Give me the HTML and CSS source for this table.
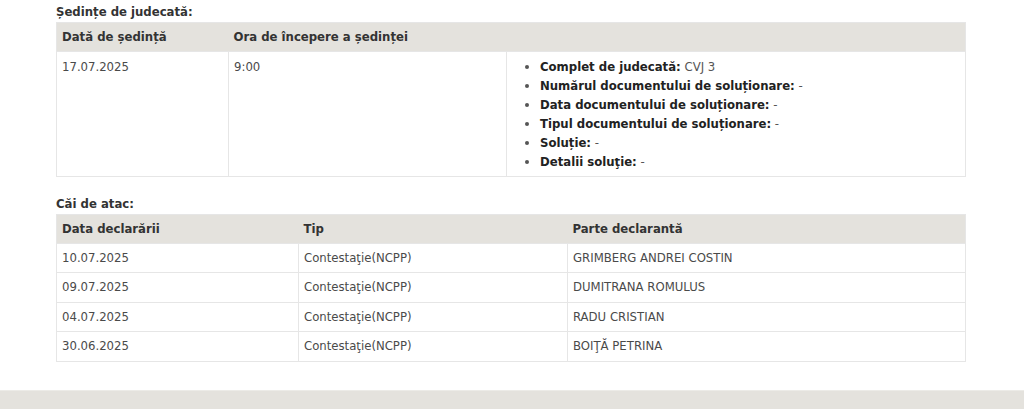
FILE: index.html
```html
<!DOCTYPE html>
<html lang="ro">
<head>
<meta charset="utf-8">
<title>Dosar</title>
<link rel="stylesheet" href="styles.css">
</head>
<body>
<main class="content">
  <h3 class="section-title">Ședințe de judecată:</h3>
  <table class="grid sessions">
    <colgroup><col class="c1"><col class="c2"><col class="c3"></colgroup>
    <thead>
      <tr><th>Dată de ședință</th><th>Ora de începere a ședinței</th><th></th></tr>
    </thead>
    <tbody>
      <tr>
        <td>17.07.2025</td>
        <td>9:00</td>
        <td>
          <ul class="details">
            <li><b>Complet de judecată:</b> CVJ 3</li>
            <li><b>Numărul documentului de soluționare:</b> -</li>
            <li><b>Data documentului de soluționare:</b> -</li>
            <li><b>Tipul documentului de soluționare:</b> -</li>
            <li><b>Soluție:</b> -</li>
            <li><b>Detalii soluţie:</b> -</li>
          </ul>
        </td>
      </tr>
    </tbody>
  </table>

  <h3 class="section-title second">Căi de atac:</h3>
  <table class="grid appeals">
    <colgroup><col class="a1"><col class="a2"><col class="a3"></colgroup>
    <thead>
      <tr><th>Data declarării</th><th>Tip</th><th>Parte declarantă</th></tr>
    </thead>
    <tbody>
      <tr><td>10.07.2025</td><td>Contestaţie(NCPP)</td><td>GRIMBERG ANDREI COSTIN</td></tr>
      <tr><td>09.07.2025</td><td>Contestaţie(NCPP)</td><td>DUMITRANA ROMULUS</td></tr>
      <tr><td>04.07.2025</td><td>Contestaţie(NCPP)</td><td>RADU CRISTIAN</td></tr>
      <tr><td>30.06.2025</td><td>Contestaţie(NCPP)</td><td>BOIŢĂ PETRINA</td></tr>
    </tbody>
  </table>
</main>
<footer class="footer"></footer>
</body>
</html>
```

FILE: styles.css
```css
html, body {
  margin: 0;
  padding: 0;
  background: #fff;
}
body {
  font-family: "DejaVu Sans Condensed", "DejaVu Sans", sans-serif;
  font-size: 13px;
  color: #4a4a4a;
  height: 409px;
  overflow: hidden;
}
.content {
  width: 910px;
  margin-left: 56px;
  padding-top: 3px;
}
.section-title {
  margin: 0 0 1px 0;
  font-size: 13px;
  line-height: 18px;
  font-weight: bold;
  color: #333;
}
.section-title.second {
  margin-top: 18px;
}
.grid {
  width: 910px;
  border-collapse: collapse;
  table-layout: fixed;
  border: 1px solid #e6e6e6;
}
.grid th {
  background: #e4e2dd;
  color: #333;
  font-weight: bold;
  text-align: left;
  padding: 4px 5px 5px;
  line-height: 19px;
  border: none;
}
.grid td {
  padding: 5px 5px;
  line-height: 18.4px;
  vertical-align: top;
  border: 1px solid #e6e6e6;
}
.sessions td {
  line-height: 19px;
}
.sessions .c1 { width: 172px; }
.sessions .c2 { width: 278px; }
.appeals .a1 { width: 242px; }
.appeals .a2 { width: 269px; }
.details {
  margin: 0;
  padding-left: 28px;
  color: #555;
}
.details b {
  color: #222;
}
.footer {
  margin-top: 28px;
  height: 21px;
  background: #e4e2dd;
  border-top: 1px solid #ecebe7;
}
```
